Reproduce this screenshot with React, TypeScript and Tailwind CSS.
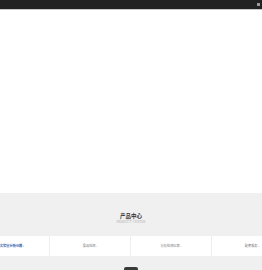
const TABS = [
  { label: '实验室分析仪器', active: true },
  { label: '食品检测', active: false },
  { label: '分析检测仪器', active: false },
  { label: '配套服务', active: false },
];

export default function App() {
  return (
    <div className="flex h-[270px] w-[262px] flex-col overflow-hidden bg-white font-['Noto_Sans_CJK_SC',sans-serif]">
      {/* top bar */}
      <div className="flex h-[9px] shrink-0 items-center justify-end bg-[#222222] pr-[2px]">
        <div className="h-[3px] w-[3px] bg-[#9a9a9a]" />
      </div>
      <div className="h-px shrink-0 bg-[#c8c8c8]" />

      {/* banner area */}
      <div className="h-[183px] shrink-0 bg-white" />

      {/* product center */}
      <div className="flex h-[43px] shrink-0 flex-col items-center justify-end bg-[#f0f0f0] pb-[12px]">
        <div className="text-[5.5px] font-bold leading-[7px] text-[#333]">产品中心</div>
        <div className="font-['Liberation_Serif',serif] text-[3px] leading-[4px] tracking-[0.2px] text-[#aaa]">
          PRODUCT CENTER
        </div>
      </div>

      {/* tabs */}
      <div className="flex h-[20px] shrink-0 overflow-hidden bg-white">
        {TABS.map((t, i) => (
          <div
            key={t.label}
            className={`flex shrink-0 items-center ${
              i === 0 ? 'w-[49px] justify-start' : 'w-[81px] justify-center border-l border-[#eeeeee]'
            }`}
          >
            <span
              className={`whitespace-nowrap text-[3.2px] leading-[4px] ${
                t.active ? 'font-bold text-[#2b5ea8]' : 'text-[#777]'
              }`}
            >
              {t.label} ›
            </span>
          </div>
        ))}
      </div>

      {/* product list */}
      <div className="flex flex-1 justify-center bg-[#f0f0f0] pt-[11px]">
        <div className="h-[4px] w-[14px] shrink-0 rounded-t-[2px] bg-[#3a3a3a]" />
      </div>
    </div>
  );
}
